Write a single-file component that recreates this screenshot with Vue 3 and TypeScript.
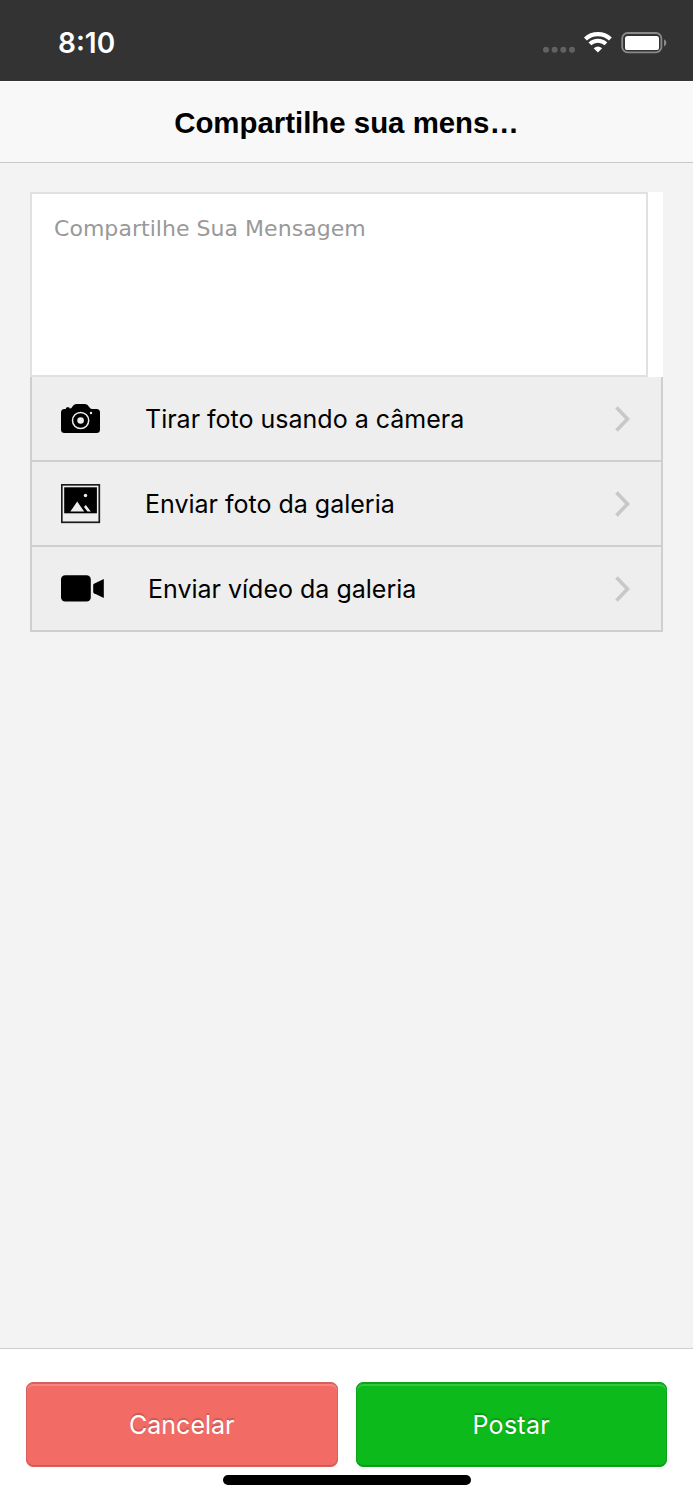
<script setup lang="ts">
import { ref } from 'vue'

type IconName = 'camera' | 'picture' | 'video'
interface Action {
  icon: IconName
  label: string
}

const message = ref<string>('')
const actions: Action[] = [
  { icon: 'camera', label: 'Tirar foto usando a câmera' },
  { icon: 'picture', label: 'Enviar foto da galeria' },
  { icon: 'video', label: 'Enviar vídeo da galeria' },
]
</script>

<template>
  <div class="screen">
    <header class="status">
      <span class="time">8:10</span>
      <svg class="indicators" width="126" height="26" viewBox="0 0 126 26">
        <g fill="#626262">
          <circle cx="6" cy="19.7" r="3" />
          <circle cx="14.6" cy="19.7" r="3" />
          <circle cx="23.3" cy="19.7" r="3" />
          <circle cx="32" cy="19.7" r="3" />
        </g>
        <path d="M45.4 9A18.4 18.4 0 0 1 70.4 9" fill="none" stroke="#fff" stroke-width="4.2" />
        <path d="M49.9 13.9A11.6 11.6 0 0 1 65.9 13.9" fill="none" stroke="#fff" stroke-width="4" />
        <path d="M53.7 18.2Q57.9 14.6 62.1 18.2L57.9 22.6Z" fill="#fff" />
        <rect x="82.2" y="3" width="39.2" height="19.3" rx="5.4" fill="none" stroke="#8a8a8a" stroke-width="1.8" />
        <rect x="85" y="6" width="34" height="14" rx="2.6" fill="#fff" />
        <path d="M124 9.2Q126.4 10.2 126.4 12.8T124 16.4Z" fill="#8a8a8a" />
      </svg>
    </header>

    <div class="navbar"><h1 class="title">Compartilhe sua mens…</h1></div>

    <main class="content">
      <div class="compose">
        <textarea v-model="message" class="message" placeholder="Compartilhe Sua Mensagem"></textarea>
      </div>
      <ul class="actions">
        <li v-for="action in actions" :key="action.icon" class="action">
          <svg v-if="action.icon === 'camera'" class="icon" width="44" height="40" viewBox="0 0 44 40">
            <path d="M3.5 10H4.8Q5 8.2 6 8.2H7.5Q8.5 8.2 8.7 9.6Q10.4 9.4 11 8.2Q12.8 5 15.8 5H23.8Q26.6 5 28.4 8.2Q29.2 10 31 10H35.5Q39 10 39 13.5V30.5Q39 34 35.5 34H3.5Q0 34 0 30.5V13.5Q0 10 3.5 10Z" />
            <circle cx="19.6" cy="21.5" r="8.1" fill="none" stroke="#eee" stroke-width="1.5" />
            <circle cx="19.6" cy="21.5" r="3.3" fill="#eee" />
            <circle cx="30" cy="14" r="1.2" fill="#eee" />
          </svg>
          <svg v-else-if="action.icon === 'picture'" class="icon" width="44" height="40" viewBox="0 0 44 40">
            <rect x=".8" y=".8" width="37.5" height="37.5" fill="none" stroke="#1c1a1b" stroke-width="1.7" />
            <rect x="3.2" y="3.3" width="32.7" height="26" />
            <path d="M9.3 27.6L16.2 17.6L23.2 27.6ZM23 22.9L24.9 21.1L29.8 27.6H26.5Z" fill="#eee" />
            <circle cx="24.5" cy="11.5" r="1.7" fill="#eee" />
          </svg>
          <svg v-else class="icon" width="44" height="40" viewBox="0 0 44 40">
            <rect x="0" y="6.3" width="29.8" height="26.3" rx="4.2" />
            <path d="M42.8 10V29L33 24.3Q32.2 23.9 32.2 23V16Q32.2 15.2 33 14.7Z" />
          </svg>
          <span class="label" :class="action.icon">{{ action.label }}</span>
          <svg class="chevron" width="16" height="26" viewBox="0 0 16 26">
            <path d="M1.5 1.6L12.5 13L1.5 24.4" fill="none" stroke="#c7c7cc" stroke-width="3.6" />
          </svg>
        </li>
      </ul>
    </main>

    <footer class="footer">
      <div class="buttons">
        <button class="button cancel" type="button"><span>Cancelar</span></button>
        <button class="button post" type="button"><span>Postar</span></button>
      </div>
      <div class="home"></div>
    </footer>
  </div>
</template>

<style>
body { margin: 0; }
</style>

<style scoped>
.screen {
  width: 693px;
  height: 1500px;
  display: flex;
  flex-direction: column;
  background: #f3f3f3;
  color: #000;
  font-family: Inter, "Liberation Sans", sans-serif;
  overflow: hidden;
}
.status {
  box-sizing: border-box;
  height: 81px;
  padding: 0 27px 0 58px;
  display: flex;
  justify-content: space-between;
  background: #333;
  color: #fff;
}
.time {
  padding-top: 26px;
  font-size: 28px;
  line-height: 34px;
  font-weight: 600;
}
.indicators { margin-top: 30px; overflow: visible; }
.navbar {
  box-sizing: border-box;
  height: 82px;
  border-top: 1px solid #fff;
  border-bottom: 1px solid #c8c8c8;
  background: #f8f8f8;
}
.title {
  margin: 0;
  text-align: center;
  font: 700 29.4px/82px "Liberation Sans", sans-serif;
}
.content { flex: 1; padding: 29px 30px 0; }
.compose { height: 185px; background: #fff; }
.message {
  box-sizing: border-box;
  display: block;
  width: 618px;
  height: 185px;
  margin: 0;
  padding: 20px 22px;
  border: 2px solid #e1e1e1;
  border-radius: 0;
  outline: none;
  resize: none;
  background: #fff;
  font: 22px/30px "DejaVu Sans", sans-serif;
  letter-spacing: .04px;
}
.message::placeholder { color: #999; opacity: 1; }
.actions {
  margin: 0;
  padding: 0;
  list-style: none;
  border: 2px solid #cfcfcf;
  border-top: 0;
  background: #eee;
}
.action {
  box-sizing: border-box;
  height: 85px;
  display: flex;
  align-items: center;
  padding: 0 30px 0 29px;
  border-bottom: 2px solid #cfcfcf;
}
.action:last-child { height: 83px; border-bottom: 0; }
.icon { flex: none; }
.label {
  flex: 1;
  margin-left: 40px;
  font-size: 25px;
  line-height: 34px;
  white-space: nowrap;
}
.label.video { margin-left: 43px; }
.chevron { flex: none; }
.footer {
  box-sizing: border-box;
  height: 152px;
  border-top: 1px solid #cecece;
  background: #fff;
}
.buttons { display: flex; gap: 18px; padding: 33px 26px 0; }
.button {
  box-sizing: border-box;
  flex: 1;
  height: 85px;
  padding: 0;
  border: 1px solid;
  border-radius: 7px;
  color: #fff;
  font: 400 25px/34px Inter, "Liberation Sans", sans-serif;
}
.cancel {
  border-color: #d8605a;
  background: #f26c65;
  box-shadow: inset 0 1px 0 #d8605a, inset 0 3px 0 #f58580, inset 0 -1px 0 #cb5a54;
  text-shadow: 0 -2px 1px #c95a54;
}
.post {
  border-color: #0ca319;
  background: #0cba1b;
  box-shadow: inset 0 1px 0 #0ca319, inset 0 3px 0 #33c640, inset 0 -1px 0 #0a9a17;
  text-shadow: 0 -2px 1px #0a9717;
  letter-spacing: .3px;
}
.home {
  width: 248px;
  height: 10px;
  margin: 8px auto 0;
  border-radius: 5px;
  background: #000;
}
</style>
